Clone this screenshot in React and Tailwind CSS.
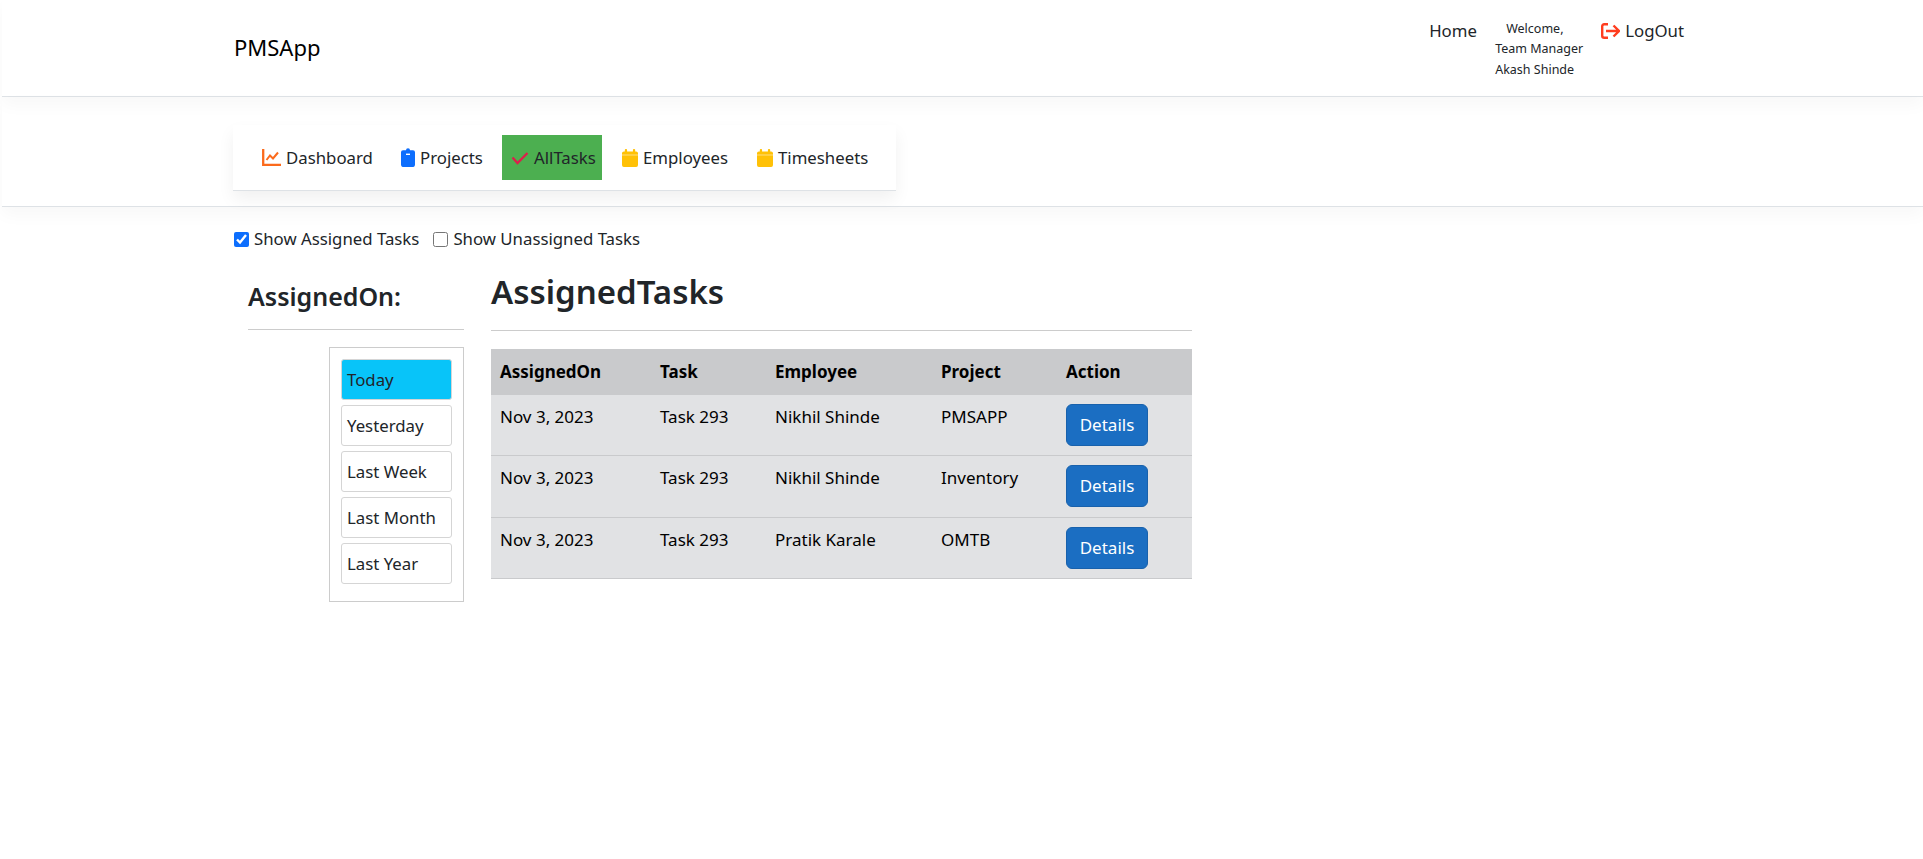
import React from "react";

const Cal = () => (
  <svg width="16" height="18" viewBox="0 0 17 19" className="shrink-0" fill="#ffc107">
    <rect x="3" y="0" width="2.4" height="4" rx="1" />
    <rect x="11.6" y="0" width="2.4" height="4" rx="1" />
    <path d="M0 4.500a2 2 0 0 1 2-2h13a2 2 0 0 1 2 2V6H0zM0 6.600h17V17a2 2 0 0 1-2 2H2a2 2 0 0 1-2-2z" />
  </svg>
);
const Chart = () => (
  <svg width="19" height="17" viewBox="0 0 19 17" className="shrink-0" fill="none" stroke="#fb6a1c" strokeWidth="2.300">
    <path d="M1.200 0v15.800H19" />
    <path d="M4.500 11l3.500-4.500 3 3 5-6" strokeWidth="2" />
  </svg>
);
const Clip = () => (
  <svg width="14" height="19" viewBox="0 0 14 19" className="shrink-0">
    <path fill="#0d6efd" d="M5 2.200a2 2 0 0 1 4 0h2.600A2.200 2.200 0 0 1 14 4.400v12.400a2.200 2.200 0 0 1-2.400 2.200H2.400A2.200 2.200 0 0 1 0 16.800V4.400a2.200 2.200 0 0 1 2.400-2.200z" />
    <rect x="5" y="5.600" width="4" height="1.400" fill="#fff" />
  </svg>
);
const Tick = () => (
  <svg width="18" height="14" viewBox="0 0 18 14" className="shrink-0" fill="none" stroke="#dc1f4b" strokeWidth="2.300">
    <path d="M1.500 6.500l5 5.500L16.500 2" />
  </svg>
);
const Out = () => (
  <svg width="19" height="16" viewBox="0 0 19 16" className="shrink-0" fill="none" stroke="#ff3d1f" strokeWidth="2.400">
    <path d="M7 1.200H3.200a2 2 0 0 0-2 2v9.600a2 2 0 0 0 2 2H7" />
    <path d="M5 8h13M12.500 2.500 18 8l-5.500 5.500" />
  </svg>
);

const navItems = [
  { label: "Dashboard", icon: <Chart />, cls: "w-[160px] pl-[29px]" },
  { label: "Projects", icon: <Clip />, cls: "w-[109px] pl-[8px]" },
  { label: "AllTasks", icon: <Tick />, cls: "w-[100px] pl-[9px] bg-[#4caf50]" },
  { label: "Employees", icon: <Cal />, cls: "w-[135px] pl-[20px]" },
  { label: "Timesheets", icon: <Cal />, cls: "w-[159px] pl-[20px]" },
];

const rows = [
  ["Task 293", "Nikhil Shinde", "PMSAPP", "h-[60px]"],
  ["Task 293", "Nikhil Shinde", "Inventory", "h-[62px]"],
  ["Task 293", "Pratik Karale", "OMTB", "h-[61px]"],
];

export default function App() {
  return (
    <div className="min-h-[859px] bg-white pl-[2px] text-[16.800px] text-[#212529] font-['Noto_Sans','Open_Sans',sans-serif]">
      <header className="h-[97px] flex justify-between pl-[232px] pr-[239px] border-b border-[#dee2e6] shadow-[0_8px_16px_rgba(0,0,0,0.03)]">
        <div className="pt-[33px] text-[22px] leading-[28px] text-black">PMSApp</div>
        <div className="flex items-start">
          <a className="mt-[19px] leading-[24px] w-[66px]">Home</a>
          <div className="mt-[19px] w-[106px] text-[12.500px] leading-[20.500px]">
            <div className="pl-[11px] leading-[20px]">Welcome,</div>
            <div>Team Manager</div>
            <div>Akash Shinde</div>
          </div>
          <a className="mt-[19px] flex items-center gap-[5px] leading-[24px]"><Out />LogOut</a>
        </div>
      </header>

      <div className="h-[110px] border-b border-[#dee2e6] pl-[231px] pt-[28px] shadow-[0_8px_16px_rgba(0,0,0,0.03)]">
        <nav className="w-[663px] h-[66px] flex items-center bg-white border-b border-[#dee2e6] shadow-[0_8px_16px_rgba(0,0,0,0.06)]">
          {navItems.map((n) => (
            <div key={n.label} className={`h-[45px] flex items-center gap-[5px] ${n.cls}`}>
              {n.icon}
              <span>{n.label}</span>
            </div>
          ))}
        </nav>
      </div>

      <div className="pl-[232px] pt-[19px] flex items-center h-[45px] leading-[24px]">
        <label className="flex items-center gap-[5px]">
          <input type="checkbox" defaultChecked className="w-[15px] h-[15px] accent-[#0d6efd]" />
          Show Assigned Tasks
        </label>
        <label className="flex items-center gap-[5px] ml-[14px]">
          <input type="checkbox" className="w-[15px] h-[15px]" />
          Show Unassigned Tasks
        </label>
      </div>

      <main className="pl-[246px] flex items-start gap-[27px] mt-[15px]">
        <aside className="w-[216px]">
          <h3 className="h-[61px] pt-[10px] text-[25px] leading-[34px] font-semibold border-b border-[#ccc] mb-[17px] mt-[2px]">AssignedOn:</h3>
          <div className="ml-[81px] w-[135px] h-[255px] border border-[#ccc] pt-[11px] px-[11px] flex flex-col gap-[5.500px]">
            {["Today", "Yesterday", "Last Week", "Last Month", "Last Year"].map((d, i) => (
              <div key={d} className={`h-[40.500px] border rounded-[3px] border-[#d5d5d5] pl-[5px] flex items-center ${i === 0 ? "bg-[#08c4f9]" : "bg-white"}`}>{d}</div>
            ))}
          </div>
        </aside>
        <section className="w-[701px]">
          <h2 className="h-[64px] text-[33px] leading-[42px] font-semibold border-b border-[#ccc] mb-[18px] pt-[4px]">AssignedTasks</h2>
          <table className="w-[701px] table-fixed border-collapse text-black text-[17px]">
            <thead>
              <tr className="bg-[#c9cacc] h-[46px] text-left">
                <th className="w-[160px] pl-[9px] font-bold">AssignedOn</th>
                <th className="w-[115px] pl-[9px] font-bold">Task</th>
                <th className="w-[166px] pl-[9px] font-bold">Employee</th>
                <th className="w-[125px] pl-[9px] font-bold">Project</th>
                <th className="pl-[9px] font-bold">Action</th>
              </tr>
            </thead>
            <tbody>
              {rows.map((r, i) => (
                <tr key={i} className={`bg-[#e1e2e4] border-b border-[#c9cacc] ${r[3]}`}>
                  <td className="pl-[9px] align-top pt-[9px]">Nov 3, 2023</td>
                  <td className="pl-[9px] align-top pt-[9px]">{r[0]}</td>
                  <td className="pl-[9px] align-top pt-[9px]">{r[1]}</td>
                  <td className="pl-[9px] align-top pt-[9px]">{r[2]}</td>
                  <td className="pl-[9px] align-top pt-[9px]">
                    <button className="w-[82px] h-[42px] rounded-[6px] bg-[#1b6ec2] border border-[#1861ac] text-white">Details</button>
                  </td>
                </tr>
              ))}
            </tbody>
          </table>
        </section>
      </main>
    </div>
  );
}
